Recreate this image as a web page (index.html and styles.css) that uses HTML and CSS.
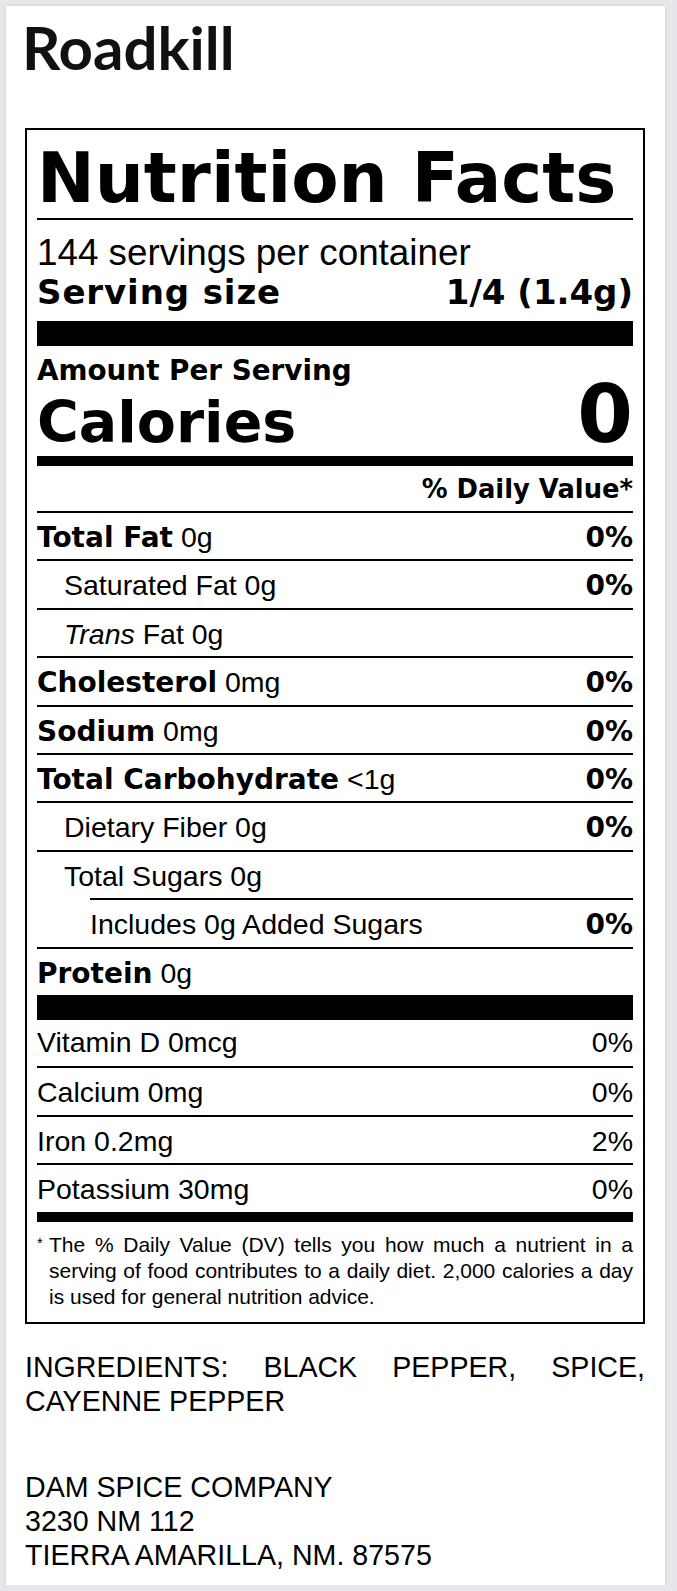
FILE: index.html
```html
<!DOCTYPE html>
<html lang="en">
<head>
<meta charset="utf-8">
<title>Roadkill - Nutrition Facts</title>
<link rel="stylesheet" href="styles.css">
</head>
<body>
<div class="card">
  <h1 class="title">Roadkill</h1>
  <section class="label">
    <h2 class="nf-title">Nutrition Facts</h2>
    <div class="rule-thin"></div>
    <div class="servings">144 servings per container</div>
    <div class="serving-size"><span class="ss-label">Serving size</span><span>1/4 (1.4g)</span></div>
    <div class="bar-thick"></div>
    <div class="amount">Amount Per Serving</div>
    <div class="calories"><span class="cal-label">Calories</span><span class="cal-num">0</span></div>
    <div class="bar-med"></div>
    <div class="dv-head">% Daily Value*</div>

    <div class="row"><span><b class="bk">Total Fat</b> 0g</span><b class="bk">0%</b></div>
    <div class="row indent"><span>Saturated Fat 0g</span><b class="bk">0%</b></div>
    <div class="row indent"><span><i>Trans</i> Fat 0g</span></div>
    <div class="row"><span><b class="bk">Cholesterol</b> 0mg</span><b class="bk">0%</b></div>
    <div class="row"><span><b class="bk">Sodium</b> 0mg</span><b class="bk">0%</b></div>
    <div class="row"><span><b class="bk">Total Carbohydrate</b> &lt;1g</span><b class="bk">0%</b></div>
    <div class="row indent"><span>Dietary Fiber 0g</span><b class="bk">0%</b></div>
    <div class="row indent"><span>Total Sugars 0g</span></div>
    <div class="row sub"><span>Includes 0g Added Sugars</span><b class="bk">0%</b></div>
    <div class="row"><span><b class="bk">Protein</b> 0g</span></div>
    <div class="bar-thick"></div>

    <div class="row vrow first"><span>Vitamin D 0mcg</span><span>0%</span></div>
    <div class="row vrow"><span>Calcium 0mg</span><span>0%</span></div>
    <div class="row vrow"><span>Iron 0.2mg</span><span>2%</span></div>
    <div class="row vrow"><span>Potassium 30mg</span><span>0%</span></div>
    <div class="bar-med"></div>

    <p class="foot"><span class="ast">*</span>The % Daily Value (DV) tells you how much a nutrient in a serving of food contributes to a daily diet. 2,000 calories a day is used for general nutrition advice.</p>
  </section>

  <p class="ingredients">INGREDIENTS: BLACK PEPPER, SPICE, CAYENNE PEPPER</p>
  <p class="address">DAM SPICE COMPANY<br>3230 NM 112<br>TIERRA AMARILLA, NM. 87575</p>
</div>
</body>
</html>
```

FILE: styles.css
```css
html, body {
  margin: 0;
  padding: 0;
}

body {
  background: #e6e6eb;
  font-family: "Liberation Sans", Arial, sans-serif;
  color: #000;
}

.card {
  background: #fff;
  margin: 6px 0 0 6px;
  width: 659px;
  box-sizing: border-box;
  padding: 11px 20px 13px 19px;
  box-shadow: 0 0 3px rgba(0, 0, 0, 0.12);
}

.title {
  font-family: Lato, "Liberation Sans", sans-serif;
  font-weight: 700;
  font-size: 60px;
  line-height: 60px;
  margin: 0 0 51px -3px;
  color: #111;
}

.label {
  border: 2px solid #000;
  padding: 0 10px;
}

.bk,
.nf-title,
.serving-size,
.amount,
.calories,
.dv-head {
  font-family: "DejaVu Sans", sans-serif;
  font-weight: 700;
}

.nf-title {
  margin: 14px 0 0;
  font-size: 69px;
  line-height: 68px;
  white-space: nowrap;
}

.rule-thin {
  height: 2px;
  background: #000;
  margin-top: 6px;
}

.servings {
  margin-top: 13px;
  font-size: 36.8px;
  line-height: 40px;
}

.serving-size {
  display: flex;
  justify-content: space-between;
  font-size: 34px;
  line-height: 38px;
}

.ss-label {
  letter-spacing: 0.9px;
}

.bar-thick {
  height: 25px;
  background: #000;
  margin-top: 10px;
}

.row + .bar-thick {
  margin-top: 0;
}

.amount {
  margin-top: 9.5px;
  font-size: 27.8px;
  line-height: 30px;
}

.calories {
  display: flex;
  justify-content: space-between;
  align-items: baseline;
  margin-top: 1px;
}

.cal-label {
  font-size: 57px;
  line-height: 56px;
}

.cal-num {
  font-size: 80px;
  line-height: 56px;
}

.bar-med {
  height: 10px;
  background: #000;
  margin-top: 6.6px;
}

.row + .bar-med {
  margin-top: 0;
}

.dv-head {
  text-align: right;
  font-size: 25.8px;
  line-height: 30px;
  padding: 8px 0 7px;
}

.row {
  display: flex;
  justify-content: space-between;
  box-sizing: border-box;
  height: 48.4px;
  border-top: 2px solid #000;
  padding-top: 3px;
  font-size: 28.5px;
  line-height: 43.4px;
  white-space: nowrap;
  overflow: hidden;
}

.row .bk {
  font-size: 28px;
}

.row.indent {
  padding-left: 27px;
}

.row.sub {
  margin-left: 53px;
}

.row i {
  font-style: italic;
}

.row.vrow.first {
  border-top: 0;
  height: 46.4px;
  padding-top: 1px;
}

.foot {
  margin: 0;
  padding: 10px 0 12px 12px;
  text-indent: -12px;
  font-size: 21px;
  line-height: 26px;
  text-align: justify;
}

.ast {
  display: inline-block;
  width: 12px;
  text-indent: 0;
  font-size: 15px;
  vertical-align: 4px;
  line-height: 10px;
}

.ingredients {
  margin: 26px 0 0;
  font-size: 28.6px;
  line-height: 34px;
  text-align: justify;
}

.address {
  margin: 52px 0 0;
  font-size: 28.6px;
  line-height: 34px;
}
```
